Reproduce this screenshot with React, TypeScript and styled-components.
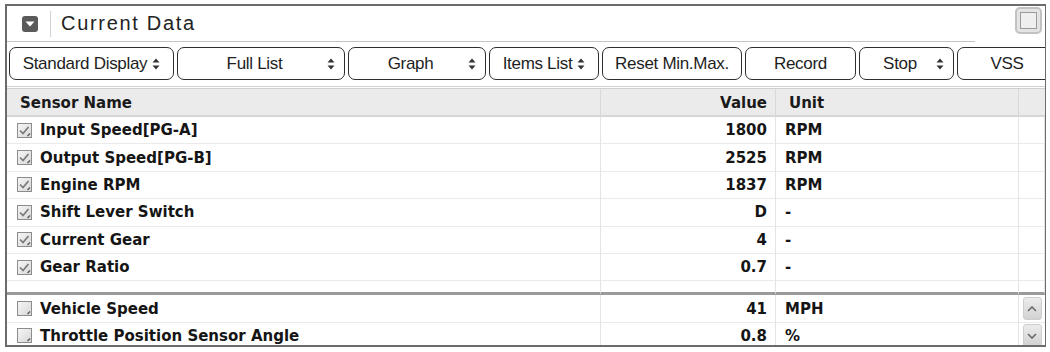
import React from "react";
import styled, { createGlobalStyle } from "styled-components";

type Row = { name: string; value: string; unit: string; checked: boolean };

const topRows: Row[] = [
  { name: "Input Speed[PG-A]", value: "1800", unit: "RPM", checked: true },
  { name: "Output Speed[PG-B]", value: "2525", unit: "RPM", checked: true },
  { name: "Engine RPM", value: "1837", unit: "RPM", checked: true },
  { name: "Shift Lever Switch", value: "D", unit: "-", checked: true },
  { name: "Current Gear", value: "4", unit: "-", checked: true },
  { name: "Gear Ratio", value: "0.7", unit: "-", checked: true },
];

const bottomRows: Row[] = [
  { name: "Vehicle Speed", value: "41", unit: "MPH", checked: false },
  { name: "Throttle Position Sensor Angle", value: "0.8", unit: "%", checked: false },
];

const tools: { label: string; width: number; select?: boolean; tight?: boolean }[] = [
  { label: "Standard Display", width: 165, select: true, tight: true },
  { label: "Full List", width: 168, select: true },
  { label: "Graph", width: 138, select: true },
  { label: "Items List", width: 110, select: true, tight: true },
  { label: "Reset Min.Max.", width: 140 },
  { label: "Record", width: 111 },
  { label: "Stop", width: 95, select: true },
  { label: "VSS", width: 100 },
];

const GlobalStyle = createGlobalStyle`
  body {
    margin: 0;
    background: #ffffff;
    font-family: "Liberation Sans", Arial, sans-serif;
  }
`;

const Panel = styled.div`
  margin: 4px 0 0 5px;
  width: 1041px;
  height: 343px;
  box-sizing: border-box;
  border: 2px solid #6b6b6b;
  border-right-width: 1px;
  overflow: hidden;
  display: flex;
  flex-direction: column;
`;

const TitleBar = styled.div`
  display: flex;
  height: 36px;
  flex-shrink: 0;
`;

const TitleMain = styled.div`
  width: 968px;
  display: flex;
  align-items: center;
  border-bottom: 1px solid #c4c4c4;
`;

const DropIcon = styled.div`
  width: 16px;
  height: 16px;
  margin-left: 15px;
  border-radius: 3px;
  background: #5a5a5a;
  display: flex;
  align-items: center;
  justify-content: center;
`;

const TitleDivider = styled.div`
  width: 1px;
  height: 26px;
  margin: 0 10px 0 12px;
  background: #d2d2d2;
`;

const Title = styled.span`
  font-size: 20px;
  letter-spacing: 1.7px;
  color: #222;
`;

const TitleSide = styled.div`
  flex: 1;
  display: flex;
  justify-content: flex-end;
  align-items: flex-start;
  padding: 1px 3px 0 0;
`;

const MaxButton = styled.div`
  width: 27px;
  height: 27px;
  box-sizing: border-box;
  border: 2px solid #c2c2c2;
  border-radius: 5px;
  background: #e4e4e4;
  display: flex;
  align-items: center;
  justify-content: center;
  &::after {
    content: "";
    width: 15px;
    height: 15px;
    border: 1px solid #9a9a9a;
    background: #efefef;
  }
`;

const Toolbar = styled.div`
  display: flex;
  gap: 3px;
  padding: 5px 0 0 2px;
  height: 47px;
  box-sizing: border-box;
  flex-shrink: 0;
  border-bottom: 3px double #d0d0d0;
`;

const ToolButton = styled.div<{ $w: number; $tight?: boolean }>`
  width: ${(p) => p.$w}px;
  flex-shrink: 0;
  height: 33px;
  box-sizing: border-box;
  border: 1px solid #2e2e2e;
  border-radius: 7px;
  background: #fff;
  display: flex;
  align-items: center;
  justify-content: ${(p) => (p.$tight ? "center" : "space-between")};
  gap: 5px;
  padding: 0 9px;
  font-size: 17px;
  color: #1e1e1e;
  letter-spacing: -0.3px;
`;

const ToolLabel = styled.span<{ $center?: boolean }>`
  flex: ${(p) => (p.$center ? 1 : "none")};
  text-align: center;
`;

const Grid = styled.div`
  display: grid;
  grid-template-columns: 594px 175px 243px 1fr;
  font-family: "DejaVu Sans", "Liberation Sans", sans-serif;
`;

const HeadCell = styled.div<{ $right?: boolean; $last?: boolean }>`
  height: 28px;
  box-sizing: border-box;
  display: flex;
  align-items: center;
  justify-content: ${(p) => (p.$right ? "flex-end" : "flex-start")};
  padding: ${(p) => (p.$right ? "2px 8px 0 0" : "2px 0 0 13px")};
  background: #ebebeb;
  border-right: ${(p) => (p.$last ? "none" : "1px solid #d8d8d8")};
  border-bottom: 2px solid #d6d6d6;
  font-weight: bold;
  font-size: 15px;
  color: #1a1a1a;
`;

const Cell = styled.div<{ $right?: boolean; $h?: number; $bottom?: string }>`
  height: ${(p) => p.$h ?? 27.4}px;
  box-sizing: border-box;
  display: flex;
  align-items: center;
  justify-content: ${(p) => (p.$right ? "flex-end" : "flex-start")};
  padding: ${(p) => (p.$right ? "0 8px 0 0" : "0 0 0 9px")};
  border-right: 1px solid #e4e4e4;
  border-bottom: ${(p) => p.$bottom ?? "1px solid #eaeaea"};
  font-weight: bold;
  font-size: 15px;
  color: #151515;
  white-space: nowrap;
`;

const NameCell = styled(Cell)`
  padding-left: 10px;
  gap: 8px;
`;

const ScrollCell = styled(Cell)`
  border-right: none;
  justify-content: center;
  padding: 0;
`;

const ScrollButton = styled.div`
  width: 17px;
  height: 21px;
  border-radius: 3px;
  background: linear-gradient(#ececec, #d2d2d2);
  border: 1px solid #cdcdcd;
  display: flex;
  align-items: center;
  justify-content: center;
`;

const CheckBox: React.FC<{ checked: boolean }> = ({ checked }) => (
  <svg width="15" height="15" viewBox="0 0 15 15">
    <defs>
      <linearGradient id="cbg" x1="0" y1="0" x2="1" y2="1">
        <stop offset="0" stopColor="#f6f6f6" />
        <stop offset="1" stopColor="#d8d8d8" />
      </linearGradient>
    </defs>
    <rect x="0.5" y="0.5" width="14" height="14" fill="url(#cbg)" stroke="#8c8c8c" />
    {checked && (
      <path d="M3 7.5 L6 10.5 L11.5 4" fill="none" stroke="#7a7a7a" strokeWidth="1.7" />
    )}
    <path d="M10.5 13 L13 10.5" stroke="#555" strokeWidth="1.2" />
  </svg>
);

const Arrows: React.FC = () => (
  <svg width="8" height="12" viewBox="0 0 8 12">
    <path d="M4 0.5 L7.5 4.5 H0.5 Z M4 11.5 L7.5 7.5 H0.5 Z" fill="#333" />
  </svg>
);

const Chevron: React.FC<{ up?: boolean }> = ({ up }) => (
  <svg width="10" height="6" viewBox="0 0 10 6">
    <path
      d={up ? "M1 5 L5 1 L9 5" : "M1 1 L5 5 L9 1"}
      fill="none"
      stroke="#6a6a6a"
      strokeWidth="1.6"
    />
  </svg>
);

const App: React.FC = () => {
  return (
    <>
      <GlobalStyle />
      <Panel>
        <TitleBar>
          <TitleMain>
            <DropIcon>
              <svg width="10" height="6" viewBox="0 0 10 6">
                <path d="M0.5 0.5 H9.5 L5 5.5 Z" fill="#fff" />
              </svg>
            </DropIcon>
            <TitleDivider />
            <Title>Current Data</Title>
          </TitleMain>
          <TitleSide>
            <MaxButton />
          </TitleSide>
        </TitleBar>

        <Toolbar>
          {tools.map((t) => (
            <ToolButton key={t.label} $w={t.width} $tight={t.tight || !t.select}>
              <ToolLabel $center={!t.tight && t.select}>{t.label}</ToolLabel>
              {t.select && <Arrows />}
            </ToolButton>
          ))}
        </Toolbar>

        <Grid>
          <HeadCell>Sensor Name</HeadCell>
          <HeadCell $right>Value</HeadCell>
          <HeadCell>Unit</HeadCell>
          <HeadCell $last />

          {topRows.map((r) => (
            <React.Fragment key={r.name}>
              <NameCell>
                <CheckBox checked={r.checked} />
                {r.name}
              </NameCell>
              <Cell $right>{r.value}</Cell>
              <Cell>{r.unit}</Cell>
              <Cell />
            </React.Fragment>
          ))}

          <Cell $h={14} $bottom="3px solid #9a9a9a" />
          <Cell $h={14} $bottom="3px solid #9a9a9a" />
          <Cell $h={14} $bottom="3px solid #9a9a9a" />
          <Cell $h={14} $bottom="3px solid #9a9a9a" />

          {bottomRows.map((r, i) => (
            <React.Fragment key={r.name}>
              <NameCell>
                <CheckBox checked={r.checked} />
                {r.name}
              </NameCell>
              <Cell $right>{r.value}</Cell>
              <Cell>{r.unit}</Cell>
              <ScrollCell>
                <ScrollButton>
                  <Chevron up={i === 0} />
                </ScrollButton>
              </ScrollCell>
            </React.Fragment>
          ))}
        </Grid>
      </Panel>
    </>
  );
};

export default App;
